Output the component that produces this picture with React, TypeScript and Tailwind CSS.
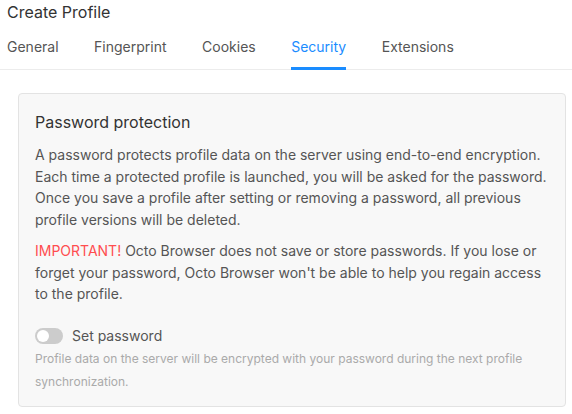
export default function App() {
  const tabs = ["General", "Fingerprint", "Cookies", "Security", "Extensions"];
  return (
    <div className="w-[572px] h-[414px] bg-white overflow-hidden" style={{ fontFamily: "Inter, 'Noto Sans', sans-serif" }}>
      <div className="pl-[7px] pt-[2px] text-[16px] leading-[20px] text-[#333333]">Create Profile</div>
      <div className="mt-[11px] flex gap-[35.5px] pl-[7px] border-b border-[#ececec] h-[37px]">
        {tabs.map((t) => (
          <div key={t} className={"relative text-[14px] leading-[20px] pt-[4px] " + (t === "Security" ? "text-[#1a8cff]" : "text-[#555555]")}>
            {t}
            {t === "Security" && <div className="absolute left-0 right-0 bottom-[-1px] h-[3px] bg-[#1a8cff]" />}
          </div>
        ))}
      </div>
      <div className="ml-[18px] w-[548px] mt-[23px] h-[314px] rounded-[4px] border border-[#e3e3e3] bg-[#f8f8f8] px-[16px] pt-[18px]">
        <div className="text-[16px] leading-[20px] text-[#333333]">Password protection</div>
        <p className="mt-[12px] text-[14px] leading-[21.5px] text-[#555555]">
          A password protects profile data on the server using end-to-end encryption. Each time a protected profile is launched, you will be asked for the password. Once you save a profile after setting or removing a password, all previous profile versions will be deleted.
        </p>
        <p className="mt-[10px] text-[14px] leading-[21.5px] text-[#555555]">
          <span className="text-[#ff4d4f]">IMPORTANT!</span> Octo Browser does not save or store passwords. If you lose or forget your password, Octo Browser won't be able to help you regain access to the profile.
        </p>
        <div className="mt-[21px] flex items-center gap-[9px]">
          <div className="w-[28px] h-[16px] rounded-full bg-[#cccccc] relative">
            <div className="absolute left-[2px] top-[2px] w-[12px] h-[12px] rounded-full bg-white" />
          </div>
          <span className="text-[14px] leading-[20px] text-[#555555]">Set password</span>
        </div>
        <p className="mt-[1px] text-[12px] leading-[23px] text-[#aaaaaa]">
          Profile data on the server will be encrypted with your password during the next profile synchronization.
        </p>
      </div>
    </div>
  );
}
